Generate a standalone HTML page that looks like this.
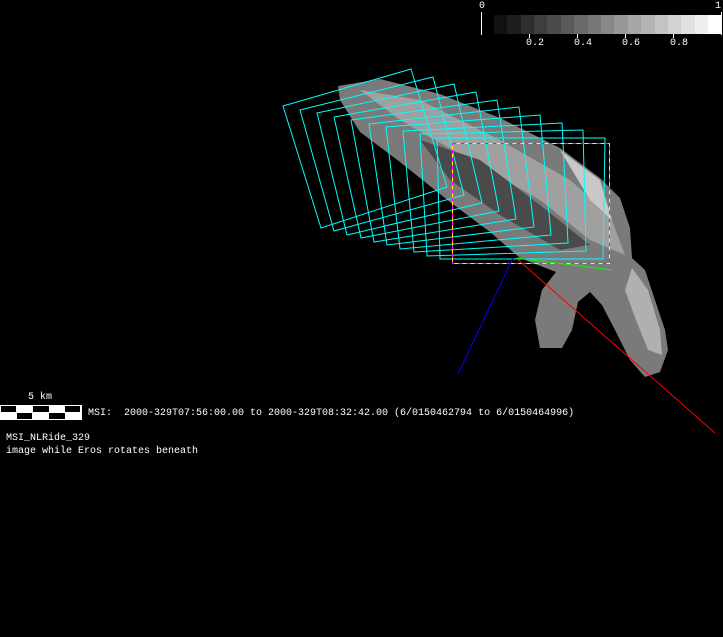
<!DOCTYPE html>
<html><head><style>
html,body{margin:0;padding:0;background:#000;width:723px;height:637px;overflow:hidden}
.t{position:absolute;color:#fff;font-family:"Liberation Mono",monospace;font-size:10px;line-height:12px;white-space:pre}
</style></head><body>
<svg width="723" height="637" style="position:absolute;left:0;top:0">
<g>
<rect x="494" y="15" width="14" height="19" fill="#111"/>
<rect x="507" y="15" width="14" height="19" fill="#1e1e1e"/>
<rect x="521" y="15" width="14" height="19" fill="#2e2e2e"/>
<rect x="534" y="15" width="14" height="19" fill="#3e3e3e"/>
<rect x="547" y="15" width="14" height="19" fill="#4b4b4b"/>
<rect x="561" y="15" width="14" height="19" fill="#5a5a5a"/>
<rect x="574" y="15" width="14" height="19" fill="#6a6a6a"/>
<rect x="588" y="15" width="14" height="19" fill="#787878"/>
<rect x="601" y="15" width="14" height="19" fill="#888"/>
<rect x="614" y="15" width="14" height="19" fill="#979797"/>
<rect x="628" y="15" width="14" height="19" fill="#a6a6a6"/>
<rect x="641" y="15" width="14" height="19" fill="#b4b4b4"/>
<rect x="655" y="15" width="14" height="19" fill="#c3c3c3"/>
<rect x="668" y="15" width="14" height="19" fill="#d2d2d2"/>
<rect x="681" y="15" width="14" height="19" fill="#e1e1e1"/>
<rect x="695" y="15" width="14" height="19" fill="#efefef"/>
<rect x="708" y="15" width="14" height="19" fill="#fff"/>
<line x1="481.5" y1="12" x2="481.5" y2="35" stroke="#fff"/>
<line x1="721.5" y1="12" x2="721.5" y2="35" stroke="#fff"/>
<line x1="529.5" y1="34" x2="529.5" y2="38" stroke="#fff"/>
<line x1="577.5" y1="34" x2="577.5" y2="38" stroke="#fff"/>
<line x1="625.5" y1="34" x2="625.5" y2="38" stroke="#fff"/>
<line x1="673.5" y1="34" x2="673.5" y2="38" stroke="#fff"/>
</g>
<path d="M338,86 L380,79 L440,94 L500,118 L560,148 L600,178 L620,198 L630,228 L632,258 L645,270 L655,300 L665,330 L668,350 L660,372 L645,377 L630,360 L615,330 L602,305 L590,292 L578,302 L572,330 L562,348 L540,348 L535,320 L542,290 L556,272 L520,258 L490,232 L450,202 L400,162 L360,132 L340,100 Z" fill="#7a7a7a"/>
<path d="M360,90 L420,100 L500,140 L570,180 L610,215 L625,255 L590,240 L540,200 L470,160 L400,120 Z" fill="#a0a0a0"/>
<path d="M420,140 L480,160 L540,205 L590,245 L560,250 L500,215 L450,180 Z" fill="#4a4a4a"/>
<path d="M632,268 L648,290 L660,330 L662,355 L648,350 L636,320 L625,290 Z" fill="#b0b0b0"/>
<path d="M560,150 L600,180 L612,220 L590,200 Z" fill="#c8c8c8"/>
<g fill="none" stroke="#0ff" stroke-width="1">
<polygon points="283,106 411,69 447,187 321,228"/>
<polygon points="300,110 433,77 464,195 334,231"/>
<polygon points="317,113 454,84 482,203 347,235"/>
<polygon points="334,117 476,92 499,211 361,238"/>
<polygon points="351,120 497,100 516,219 374,242"/>
<polygon points="369,124 519,107 534,227 387,245"/>
<polygon points="386,127 540,115 551,235 400,249"/>
<polygon points="403,131 562,123 568,243 414,252"/>
<polygon points="420,134 583,130 586,251 427,256"/>
<polygon points="437,138 605,138 603,259 440,259"/>
</g>
<rect x="452.5" y="143.5" width="157" height="120" fill="none" stroke="#ff0" stroke-width="1"/>
<rect x="452.5" y="143.5" width="157" height="120" fill="none" stroke="#f0f" stroke-width="1" stroke-dasharray="4 4"/>
<line x1="516" y1="258" x2="715" y2="433" stroke="#f00"/>
<line x1="513" y1="258" x2="458" y2="374" stroke="#00f"/>
<line x1="516" y1="258" x2="612" y2="270" stroke="#0f0"/>
<rect x="0" y="405" width="82" height="15" fill="#fff"/>
<rect x="1" y="406" width="15" height="6" fill="#000"/>
<rect x="33" y="406" width="16" height="6" fill="#000"/>
<rect x="65" y="406" width="15" height="6" fill="#000"/>
<rect x="17" y="413" width="15" height="6" fill="#000"/>
<rect x="49" y="413" width="16" height="6" fill="#000"/>
</svg>
<div class="t" style="left:479px;top:1px">0</div>
<div class="t" style="left:715px;top:1px">1</div>
<div class="t" style="left:526px;top:38px">0.2</div>
<div class="t" style="left:574px;top:38px">0.4</div>
<div class="t" style="left:622px;top:38px">0.6</div>
<div class="t" style="left:670px;top:38px">0.8</div>
<div class="t" style="left:28px;top:392px">5 km</div>
<div class="t" style="left:88px;top:408px">MSI:  2000-329T07:56:00.00 to 2000-329T08:32:42.00 (6/0150462794 to 6/0150464996)</div>
<div class="t" style="left:6px;top:433px">MSI_NLRide_329</div>
<div class="t" style="left:6px;top:446px">image while Eros rotates beneath</div>
</body></html>
